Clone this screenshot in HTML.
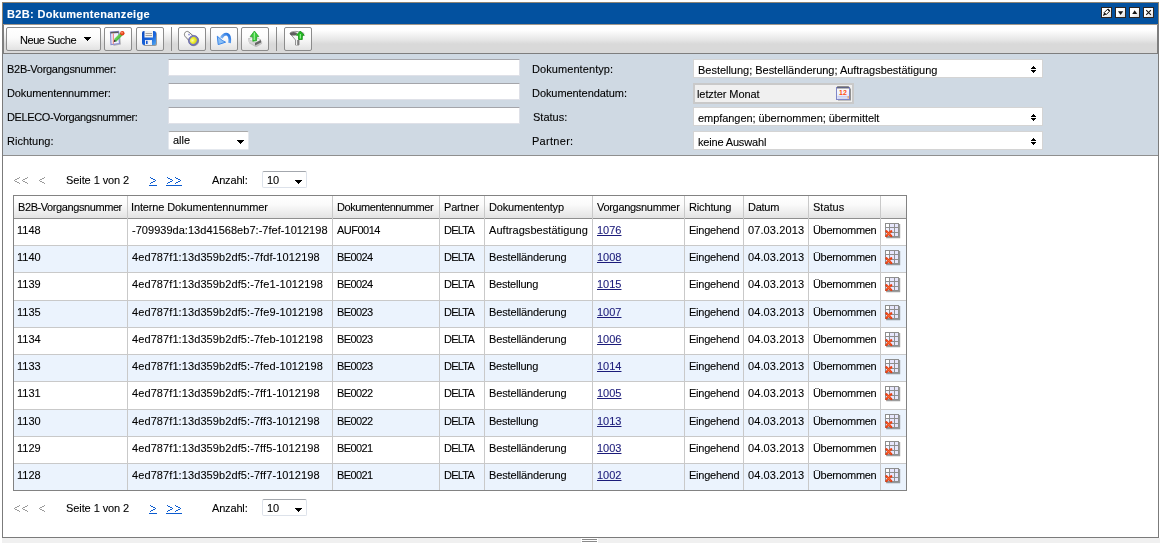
<!DOCTYPE html>
<html><head><meta charset="utf-8"><title>B2B: Dokumentenanzeige</title>
<style>
*{margin:0;padding:0;box-sizing:border-box}
html,body{width:1162px;height:546px;overflow:hidden;background:#fff;font-family:"Liberation Sans",sans-serif;font-size:11px;color:#000}
.a{position:absolute}
.t{position:absolute;white-space:nowrap;line-height:13px;will-change:transform;-webkit-text-stroke:0.1px currentColor}
</style></head><body>

<div class="a" style="left:2px;top:2px;width:1157px;height:536px;border:1px solid #7b7b7b;background:#fff"></div>
<div class="a" style="left:3px;top:3px;width:1155px;height:21px;background:#03519f"></div>
<div class="a" style="left:2px;top:2px;width:1157px;height:22px;border:1px solid #8e8474;border-bottom:0"></div>
<div class="t" style="left:7px;top:8px;letter-spacing:0.333px;color:#fff;font-weight:bold">B2B: Dokumentenanzeige</div>
<div class="a" style="left:1101px;top:7px;width:11px;height:11px;border:1px solid #2e2622;background:linear-gradient(135deg,#fff 45%,#dcdcdc)"></div>
<svg class="a" style="left:1101px;top:7px" width="11" height="11" viewBox="0 0 11 11"><path d="M3.2 5.6L6.6 2.2L8.6 4.2L5.2 7.6Z" fill="#fff" stroke="#111" stroke-width="1"/><path d="M3.2 5.6L5.2 7.6L1.8 8.9Z" fill="#111"/><path d="M6.2 2.6L7.2 1.6L9.2 3.6L8.2 4.6Z" fill="#111"/></svg>
<div class="a" style="left:1115px;top:7px;width:11px;height:11px;border:1px solid #2e2622;background:linear-gradient(135deg,#fff 45%,#dcdcdc)"></div>
<svg class="a" style="left:1115px;top:7px" width="11" height="11" viewBox="0 0 11 11"><path d="M3 4.2H8.2L5.6 7.9Z" fill="#151515"/></svg>
<div class="a" style="left:1129px;top:7px;width:11px;height:11px;border:1px solid #2e2622;background:linear-gradient(135deg,#fff 45%,#dcdcdc)"></div>
<svg class="a" style="left:1129px;top:7px" width="11" height="11" viewBox="0 0 11 11"><path d="M3.2 6.9H8.2L5.7 3.2Z" fill="#151515"/></svg>
<div class="a" style="left:1143px;top:7px;width:11px;height:11px;border:1px solid #2e2622;background:linear-gradient(135deg,#fff 45%,#dcdcdc)"></div>
<svg class="a" style="left:1143px;top:7px" width="11" height="11" viewBox="0 0 11 11"><path d="M3.2 3.2L7.9 7.9M7.9 3.2L3.2 7.9" stroke="#151515" stroke-width="1.1"/></svg>
<div class="a" style="left:2px;top:24px;width:1157px;height:30px;background:linear-gradient(#fff 0px,#fff 6px,#e6e6e6 16px,#d9d9d9 20px,#d9d9d9 30px);border:1px solid #7e7e7e;border-left-width:2px;border-right-width:2px;border-top:0"></div>
<div class="a" style="left:3px;top:24px;width:1155px;height:1px;background:#a0978c"></div>
<div class="a" style="left:6px;top:27px;width:95px;height:24px;border:1px solid #8c8c8c;border-radius:2px;background:linear-gradient(#fff 0%,#fbfbfb 45%,#e2e2e2 100%)"></div>
<div class="t" style="left:20px;top:34px;letter-spacing:-0.444px;">Neue Suche</div>
<svg class="a" style="left:84px;top:37px" width="7" height="4" shape-rendering="crispEdges"><path d="M0 0h7v1h-7zM1 1h5v1h-5zM2 2h3v1h-3zM3 3h1v1h-1z" fill="#000"/></svg>
<div class="a" style="left:104px;top:27px;width:28px;height:24px;border:1px solid #8c8c8c;border-radius:2px;background:linear-gradient(#fff 0%,#fbfbfb 45%,#e2e2e2 100%)"></div>
<div class="a" style="left:136px;top:27px;width:28px;height:24px;border:1px solid #8c8c8c;border-radius:2px;background:linear-gradient(#fff 0%,#fbfbfb 45%,#e2e2e2 100%)"></div>
<div class="a" style="left:178px;top:27px;width:28px;height:24px;border:1px solid #8c8c8c;border-radius:2px;background:linear-gradient(#fff 0%,#fbfbfb 45%,#e2e2e2 100%)"></div>
<div class="a" style="left:210px;top:27px;width:28px;height:24px;border:1px solid #8c8c8c;border-radius:2px;background:linear-gradient(#fff 0%,#fbfbfb 45%,#e2e2e2 100%)"></div>
<div class="a" style="left:241px;top:27px;width:28px;height:24px;border:1px solid #8c8c8c;border-radius:2px;background:linear-gradient(#fff 0%,#fbfbfb 45%,#e2e2e2 100%)"></div>
<div class="a" style="left:284px;top:27px;width:28px;height:24px;border:1px solid #8c8c8c;border-radius:2px;background:linear-gradient(#fff 0%,#fbfbfb 45%,#e2e2e2 100%)"></div>
<div class="a" style="left:171px;top:27px;width:1px;height:24px;background:#8a8a8a"></div>
<div class="a" style="left:276px;top:27px;width:1px;height:24px;background:#8a8a8a"></div>
<svg class="a" style="left:109px;top:30px" width="17" height="17" viewBox="0 0 17 17"><defs><linearGradient id="gp" x1="0" y1="0" x2="1" y2="1"><stop offset="0" stop-color="#9ef07a"/><stop offset="1" stop-color="#1d9e1d"/></linearGradient></defs><path d="M2.5 2.5L10 1.5L11 13.5L3.5 15Z" fill="#555" opacity=".35" transform="translate(1,1)"/><path d="M1.5 2L9.5 1.5L10.5 13.5L2 14.5Z" fill="#eef3ff" stroke="#8a8cd0" stroke-width="1.2"/><path d="M1.5 2L9.5 1.5L9.6 3L1.6 3.5Z" fill="#5a5a5a"/><path d="M4.3 3.5V14" stroke="#f07a70" stroke-width="1"/><path d="M6 10.5L12.5 4" stroke="url(#gp)" stroke-width="3.2"/><path d="M5.2 11.6L6.6 11.2L5.6 10.2Z" fill="#333" stroke="#333" stroke-width="1"/><circle cx="13.3" cy="3.3" r="2.2" fill="#e2401a"/><circle cx="13" cy="2.8" r="1" fill="#ff8a60"/></svg>
<svg class="a" style="left:141px;top:30px" width="17" height="17" viewBox="0 0 17 17"><defs><linearGradient id="gs" x1="0" y1="0" x2="1" y2="1"><stop offset="0" stop-color="#0a48c0"/><stop offset=".6" stop-color="#1a66dc"/><stop offset="1" stop-color="#55aaf0"/></linearGradient></defs><rect x="2" y="2" width="14" height="14" rx="2" fill="#333" opacity=".45"/><rect x="1" y="1" width="14" height="14" rx="2" fill="url(#gs)"/><rect x="3.5" y="1" width="8.5" height="6.5" fill="#f4f2ee"/><path d="M4.5 3.5h6.5M4.5 5.5h6.5" stroke="#9a9a9a" stroke-width=".9"/><rect x="4" y="10" width="7" height="5" fill="#e8ecf4"/><rect x="5" y="10.8" width="1.6" height="3.2" fill="#1a5ad0"/><path d="M8 14L10 11" stroke="#fff" stroke-width="1"/></svg>
<svg class="a" style="left:183px;top:30px" width="17" height="17" viewBox="0 0 17 17"><defs><linearGradient id="gf" x1="0" y1="1" x2="1" y2="0"><stop offset="0" stop-color="#d8d8d8"/><stop offset=".5" stop-color="#ffffff"/><stop offset="1" stop-color="#cfcfcf"/></linearGradient><radialGradient id="gl" cx=".4" cy=".4" r=".7"><stop offset="0" stop-color="#fbfbb0"/><stop offset=".5" stop-color="#eded2a"/><stop offset="1" stop-color="#c8c820"/></radialGradient></defs><path d="M1.6 3.4C2.2 1.4 4.4 0.8 5.8 2L12.2 7.6L7.6 12.4L1.9 6.2C1.3 5.4 1.3 4.3 1.6 3.4Z" fill="url(#gf)" stroke="#7c7c7c" stroke-width="1"/><circle cx="6" cy="4.6" r="0.9" fill="#8a8fd8"/><ellipse cx="11.2" cy="11.2" rx="5.2" ry="4.8" transform="rotate(-45 11.2 11.2)" fill="#3c3c3c" opacity=".4"/><ellipse cx="10.4" cy="10.4" rx="5.2" ry="4.8" transform="rotate(-45 10.4 10.4)" fill="#7a7cc0" stroke="#5a5c98" stroke-width=".6"/><ellipse cx="10.4" cy="10.4" rx="3.6" ry="3.3" transform="rotate(-45 10.4 10.4)" fill="url(#gl)"/></svg>
<svg class="a" style="left:215px;top:31px" width="17" height="16" viewBox="0 0 17 16"><defs><linearGradient id="gu" x1="0" y1="1" x2="1" y2="0"><stop offset="0" stop-color="#a8d0fa"/><stop offset="1" stop-color="#1c6fe0"/></linearGradient></defs><path d="M14.6 12C15.4 7 14.2 3.2 11.2 3.1C9 3 7.6 4.6 6.2 7" stroke="url(#gu)" stroke-width="2.8" fill="none"/><path d="M2.3 5.2L3.2 13.6L10.6 11.2L7.2 9.4Z" fill="#8cc0f6" stroke="#3a86e8" stroke-width="1" stroke-linejoin="round"/></svg>
<svg class="a" style="left:246px;top:30px" width="17" height="17" viewBox="0 0 17 17"><path d="M2.5 10L9 7L15.5 10.5L15.5 13L9.5 16.5L2.5 12.5Z" fill="#444" opacity=".25" transform="translate(.6,.8)"/><path d="M2 9L8.5 6.5L15 10L9 13Z" fill="#f6f6f6" stroke="#a0a0a0" stroke-width=".6"/><path d="M2 9L2 11.6L9 15.6L9 13Z" fill="#d6d6d6"/><path d="M9 13L15 10L15 12.6L9 15.6Z" fill="#666"/><path d="M8.4 1L12.8 6.6L10.6 6.6L10.6 10.8L6.8 11.2L6.8 6.6L4.2 6.6Z" fill="#3ccc3c" stroke="#1a9a1a" stroke-width=".7"/><path d="M8.4 2.6L8.2 10" stroke="#a0f5a0" stroke-width="1.1"/></svg>
<svg class="a" style="left:289px;top:30px" width="17" height="17" viewBox="0 0 17 17"><path d="M1 3.5C1 2 5 1 8 1.5C11 2 15 2.5 15 4L10 10L10 15L6.5 15L6.5 10Z" fill="#f4f4f4" stroke="#7a7a7a" stroke-width=".8"/><ellipse cx="4.5" cy="3.8" rx="3.5" ry="1.8" fill="#3a3a3a" opacity=".8"/><rect x="7" y="10" width="3" height="5" fill="#7c7c7c"/><rect x="7" y="10" width="1.2" height="5" fill="#f0f0f0"/><path d="M11.3 1L15.3 5.3L13.3 5.3L13.3 9.5L9.5 9.5L9.5 5.3L7.3 5.3Z" fill="#22b822" stroke="#149014" stroke-width=".8"/><path d="M11.4 4L11.4 8.5" stroke="#90f090" stroke-width="1.3"/></svg>
<div class="a" style="left:3px;top:54px;width:1155px;height:102px;background:#cfd9e3;border-bottom:1px solid #8f8f8f"></div>
<div class="t" style="left:7px;top:63px;letter-spacing:-0.278px;">B2B-Vorgangsnummer:</div>
<div class="t" style="left:7px;top:87px;letter-spacing:-0.125px;">Dokumentennummer:</div>
<div class="t" style="left:7px;top:111px;letter-spacing:-0.381px;">DELECO-Vorgangsnummer:</div>
<div class="t" style="left:7px;top:135px;">Richtung:</div>
<div class="a" style="left:168px;top:59px;width:352px;height:17px;background:#fff;border:1px solid #dfe1e8;border-top-color:#a4a5aa;border-radius:1px"></div>
<div class="a" style="left:168px;top:83px;width:352px;height:17px;background:#fff;border:1px solid #dfe1e8;border-top-color:#a4a5aa;border-radius:1px"></div>
<div class="a" style="left:168px;top:107px;width:352px;height:17px;background:#fff;border:1px solid #dfe1e8;border-top-color:#a4a5aa;border-radius:1px"></div>
<div class="a" style="left:168px;top:131px;width:81px;height:19px;background:#fff;border:1px solid #e4e8ee;border-top-color:#a9a9a9;border-radius:2px"></div>
<div class="t" style="left:173px;top:134px;">alle</div>
<svg class="a" style="left:237px;top:140px" width="7" height="4" shape-rendering="crispEdges"><path d="M0 0h7v1h-7zM1 1h5v1h-5zM2 2h3v1h-3zM3 3h1v1h-1z" fill="#000"/></svg>
<div class="t" style="left:532px;top:63px;letter-spacing:0.077px;">Dokumententyp:</div>
<div class="t" style="left:532px;top:87px;letter-spacing:-0.067px;">Dokumentendatum:</div>
<div class="t" style="left:533px;top:111px;">Status:</div>
<div class="t" style="left:532px;top:135px;letter-spacing:0.286px;">Partner:</div>
<div class="a" style="left:693px;top:59px;width:350px;height:19px;background:#fff;border:1px solid #d4d4d4"></div>
<div class="t" style="left:698px;top:64px;letter-spacing:-0.021px;">Bestellung; Bestelländerung; Auftragsbestätigung</div>
<svg class="a" style="left:1031px;top:66px" width="5" height="7" shape-rendering="crispEdges"><path d="M2 0h1v1h-1zM1 1h3v1h-3zM0 2h5v1h-5zM0 4h5v1h-5zM1 5h3v1h-3zM2 6h1v1h-1z" fill="#000"/></svg>
<div class="a" style="left:693px;top:107px;width:350px;height:19px;background:#fff;border:1px solid #d4d4d4"></div>
<div class="t" style="left:698px;top:112px;letter-spacing:-0.061px;">empfangen; übernommen; übermittelt</div>
<svg class="a" style="left:1031px;top:114px" width="5" height="7" shape-rendering="crispEdges"><path d="M2 0h1v1h-1zM1 1h3v1h-3zM0 2h5v1h-5zM0 4h5v1h-5zM1 5h3v1h-3zM2 6h1v1h-1z" fill="#000"/></svg>
<div class="a" style="left:693px;top:131px;width:350px;height:19px;background:#fff;border:1px solid #d4d4d4"></div>
<div class="t" style="left:698px;top:136px;letter-spacing:-0.167px;">keine Auswahl</div>
<svg class="a" style="left:1031px;top:138px" width="5" height="7" shape-rendering="crispEdges"><path d="M2 0h1v1h-1zM1 1h3v1h-3zM0 2h5v1h-5zM0 4h5v1h-5zM1 5h3v1h-3zM2 6h1v1h-1z" fill="#000"/></svg>
<div class="a" style="left:693px;top:83px;width:161px;height:21px;background:#f0f0f0;border:2px solid #c9c9c9"></div>
<div class="t" style="left:697px;top:88px;letter-spacing:-0.083px;">letzter Monat</div>
<svg class="a" style="left:835px;top:85px" width="17" height="16" viewBox="0 0 17 16"><defs><linearGradient id="gc" x1="0" y1="0" x2="0" y2="1"><stop offset="0" stop-color="#ffffff"/><stop offset="1" stop-color="#dfe3f8"/></linearGradient></defs><path d="M15 3.5h1v12h-13v-1h12z" fill="#444" opacity=".55"/><rect x="1.5" y="2.5" width="13" height="12" fill="url(#gc)" stroke="#7f86c6"/><path d="M3 1.2v2.6M5 1.2v2.6M7 1.2v2.6M9 1.2v2.6M11 1.2v2.6M13 1.2v2.6" stroke="#3c3c3c" stroke-width=".9"/><path d="M2.5 1.5h11" stroke="#777" stroke-width=".6"/><text x="8" y="10.2" font-size="7" font-weight="bold" fill="#ff5010" text-anchor="middle" font-family="Liberation Sans">12</text><path d="M2.5 11.5h11M2.5 13h11" stroke="#c4c9ee" stroke-width=".8"/><rect x="12.6" y="11" width="1.2" height="2.5" fill="#f0a060"/></svg>
<svg class="a" style="left:14px;top:177px" width="32" height="7" shape-rendering="crispEdges"><path d="M5 0h1v1h-1zM3 1h2v1h-2zM1 2h2v1h-2zM0 3h1v1h-1zM1 4h2v1h-2zM3 5h2v1h-2zM5 6h1v1h-1zM13 0h1v1h-1zM11 1h2v1h-2zM9 2h2v1h-2zM8 3h1v1h-1zM9 4h2v1h-2zM11 5h2v1h-2zM13 6h1v1h-1zM30 0h1v1h-1zM28 1h2v1h-2zM26 2h2v1h-2zM25 3h1v1h-1zM26 4h2v1h-2zM28 5h2v1h-2zM30 6h1v1h-1z" fill="#9a9a9a"/></svg>
<div class="t" style="left:66px;top:174px;letter-spacing:-0.083px;">Seite 1 von 2</div>
<svg class="a" style="left:149px;top:177px" width="34" height="9" shape-rendering="crispEdges"><path d="M1 0h1v1h-1zM2 1h2v1h-2zM4 2h2v1h-2zM6 3h1v1h-1zM4 4h2v1h-2zM2 5h2v1h-2zM1 6h1v1h-1zM18 0h1v1h-1zM19 1h2v1h-2zM21 2h2v1h-2zM23 3h1v1h-1zM21 4h2v1h-2zM19 5h2v1h-2zM18 6h1v1h-1zM26 0h1v1h-1zM27 1h2v1h-2zM29 2h2v1h-2zM31 3h1v1h-1zM29 4h2v1h-2zM27 5h2v1h-2zM26 6h1v1h-1zM0 8h8v1h-8zM17 8h16v1h-16z" fill="#0c5cd0"/></svg>
<div class="t" style="left:212px;top:174px;letter-spacing:-0.167px;">Anzahl:</div>
<div class="a" style="left:262px;top:171px;width:45px;height:17px;border:1px solid #dde2ea;border-top-color:#a3a7ad;border-radius:2px;background:#fff"></div>
<div class="t" style="left:267px;top:174px;">10</div>
<svg class="a" style="left:295px;top:180px" width="7" height="4" shape-rendering="crispEdges"><path d="M0 0h7v1h-7zM1 1h5v1h-5zM2 2h3v1h-3zM3 3h1v1h-1z" fill="#000"/></svg>
<svg class="a" style="left:14px;top:505px" width="32" height="7" shape-rendering="crispEdges"><path d="M5 0h1v1h-1zM3 1h2v1h-2zM1 2h2v1h-2zM0 3h1v1h-1zM1 4h2v1h-2zM3 5h2v1h-2zM5 6h1v1h-1zM13 0h1v1h-1zM11 1h2v1h-2zM9 2h2v1h-2zM8 3h1v1h-1zM9 4h2v1h-2zM11 5h2v1h-2zM13 6h1v1h-1zM30 0h1v1h-1zM28 1h2v1h-2zM26 2h2v1h-2zM25 3h1v1h-1zM26 4h2v1h-2zM28 5h2v1h-2zM30 6h1v1h-1z" fill="#9a9a9a"/></svg>
<div class="t" style="left:66px;top:502px;letter-spacing:-0.083px;">Seite 1 von 2</div>
<svg class="a" style="left:149px;top:505px" width="34" height="9" shape-rendering="crispEdges"><path d="M1 0h1v1h-1zM2 1h2v1h-2zM4 2h2v1h-2zM6 3h1v1h-1zM4 4h2v1h-2zM2 5h2v1h-2zM1 6h1v1h-1zM18 0h1v1h-1zM19 1h2v1h-2zM21 2h2v1h-2zM23 3h1v1h-1zM21 4h2v1h-2zM19 5h2v1h-2zM18 6h1v1h-1zM26 0h1v1h-1zM27 1h2v1h-2zM29 2h2v1h-2zM31 3h1v1h-1zM29 4h2v1h-2zM27 5h2v1h-2zM26 6h1v1h-1zM0 8h8v1h-8zM17 8h16v1h-16z" fill="#0c5cd0"/></svg>
<div class="t" style="left:212px;top:502px;letter-spacing:-0.167px;">Anzahl:</div>
<div class="a" style="left:262px;top:499px;width:45px;height:17px;border:1px solid #dde2ea;border-top-color:#a3a7ad;border-radius:2px;background:#fff"></div>
<div class="t" style="left:267px;top:502px;">10</div>
<svg class="a" style="left:295px;top:508px" width="7" height="4" shape-rendering="crispEdges"><path d="M0 0h7v1h-7zM1 1h5v1h-5zM2 2h3v1h-3zM3 3h1v1h-1z" fill="#000"/></svg>
<div class="a" style="left:13px;top:195px;width:894px;height:296px;border:1px solid #828282;background:#fff"></div>
<div class="a" style="left:14px;top:196px;width:892px;height:22px;background:linear-gradient(#fff 0%,#fafafa 40%,#e3e3e3 100%)"></div>
<div class="a" style="left:14px;top:218px;width:892px;height:1px;background:#8e8e8e"></div>
<div class="a" style="left:14px;top:219px;width:892px;height:26px;background:#fff"></div>
<div class="a" style="left:14px;top:245px;width:892px;height:1px;background:#c9c9c9"></div>
<div class="a" style="left:14px;top:246px;width:892px;height:26px;background:#ebf3fd"></div>
<div class="a" style="left:14px;top:272px;width:892px;height:1px;background:#c9c9c9"></div>
<div class="a" style="left:14px;top:273px;width:892px;height:27px;background:#fff"></div>
<div class="a" style="left:14px;top:300px;width:892px;height:1px;background:#c9c9c9"></div>
<div class="a" style="left:14px;top:301px;width:892px;height:26px;background:#ebf3fd"></div>
<div class="a" style="left:14px;top:327px;width:892px;height:1px;background:#c9c9c9"></div>
<div class="a" style="left:14px;top:328px;width:892px;height:26px;background:#fff"></div>
<div class="a" style="left:14px;top:354px;width:892px;height:1px;background:#c9c9c9"></div>
<div class="a" style="left:14px;top:355px;width:892px;height:26px;background:#ebf3fd"></div>
<div class="a" style="left:14px;top:381px;width:892px;height:1px;background:#c9c9c9"></div>
<div class="a" style="left:14px;top:382px;width:892px;height:27px;background:#fff"></div>
<div class="a" style="left:14px;top:409px;width:892px;height:1px;background:#c9c9c9"></div>
<div class="a" style="left:14px;top:410px;width:892px;height:26px;background:#ebf3fd"></div>
<div class="a" style="left:14px;top:436px;width:892px;height:1px;background:#c9c9c9"></div>
<div class="a" style="left:14px;top:437px;width:892px;height:26px;background:#fff"></div>
<div class="a" style="left:14px;top:463px;width:892px;height:1px;background:#c9c9c9"></div>
<div class="a" style="left:14px;top:464px;width:892px;height:26px;background:#ebf3fd"></div>
<div class="a" style="left:127px;top:196px;width:1px;height:294px;background:#c9c9c9"></div>
<div class="a" style="left:332px;top:196px;width:1px;height:294px;background:#c9c9c9"></div>
<div class="a" style="left:439px;top:196px;width:1px;height:294px;background:#c9c9c9"></div>
<div class="a" style="left:484px;top:196px;width:1px;height:294px;background:#c9c9c9"></div>
<div class="a" style="left:592px;top:196px;width:1px;height:294px;background:#c9c9c9"></div>
<div class="a" style="left:684px;top:196px;width:1px;height:294px;background:#c9c9c9"></div>
<div class="a" style="left:743px;top:196px;width:1px;height:294px;background:#c9c9c9"></div>
<div class="a" style="left:808px;top:196px;width:1px;height:294px;background:#c9c9c9"></div>
<div class="a" style="left:880px;top:196px;width:1px;height:294px;background:#c9c9c9"></div>
<div class="t" style="left:18px;top:201px;letter-spacing:-0.412px;">B2B-Vorgangsnummer</div>
<div class="t" style="left:131px;top:201px;letter-spacing:-0.130px;">Interne Dokumentennummer</div>
<div class="t" style="left:337px;top:201px;letter-spacing:-0.400px;">Dokumentennummer</div>
<div class="t" style="left:444px;top:201px;letter-spacing:-0.167px;">Partner</div>
<div class="t" style="left:489px;top:201px;letter-spacing:-0.167px;">Dokumententyp</div>
<div class="t" style="left:597px;top:201px;letter-spacing:-0.308px;">Vorgangsnummer</div>
<div class="t" style="left:689px;top:201px;letter-spacing:-0.143px;">Richtung</div>
<div class="t" style="left:748px;top:201px;letter-spacing:-0.250px;">Datum</div>
<div class="t" style="left:813px;top:201px;">Status</div>
<div class="t" style="left:17px;top:224px;">1148</div>
<div class="t" style="left:132px;top:224px;letter-spacing:0.029px;">-709939da:13d41568eb7:-7fef-1012198</div>
<div class="t" style="left:337px;top:224px;letter-spacing:-0.500px;">AUF0014</div>
<div class="t" style="left:444px;top:224px;letter-spacing:-0.750px;">DELTA</div>
<div class="t" style="left:489px;top:224px;letter-spacing:0.056px;">Auftragsbestätigung</div>
<div class="t" style="left:597px;top:224px;color:#1b1b7a;text-decoration:underline;">1076</div>
<div class="t" style="left:689px;top:224px;letter-spacing:-0.250px;">Eingehend</div>
<div class="t" style="left:748px;top:224px;letter-spacing:0.111px;">07.03.2013</div>
<div class="t" style="left:813px;top:224px;letter-spacing:-0.333px;">Übernommen</div>
<svg class="a" style="left:885px;top:223px" width="17" height="17" viewBox="0 0 17 17"><path d="M14 1h1.2v14.2h-14v-1.2h12.8z" fill="#4a4a4a" opacity=".55"/><rect x="0" y="0" width="14" height="14" fill="#8e8e8e"/><rect x="1" y="1" width="3" height="3" fill="#fff"/><rect x="5" y="1" width="4" height="3" fill="#e6e6fc"/><rect x="10" y="1" width="3" height="3" fill="#e6e6fc"/><rect x="1" y="5" width="3" height="4" fill="#f2f2ff"/><rect x="5" y="5" width="4" height="4" fill="#e6e6fc"/><rect x="10" y="5" width="3" height="4" fill="#e6e6fc"/><rect x="1" y="10" width="3" height="3" fill="#e6e6fc"/><rect x="5" y="10" width="4" height="3" fill="#e6e6fc"/><rect x="10" y="10" width="3" height="3" fill="#e6e6fc"/><path d="M1.4 8.2L6.2 13M6.2 8.2L1.4 13" stroke="#e63a10" stroke-width="2.3" stroke-linecap="round"/><path d="M1.9 8.7L5.7 12.5M5.7 8.7L1.9 12.5" stroke="#ff8040" stroke-width=".8"/></svg>
<div class="t" style="left:17px;top:251px;">1140</div>
<div class="t" style="left:132px;top:251px;letter-spacing:0.091px;">4ed787f1:13d359b2df5:-7fdf-1012198</div>
<div class="t" style="left:337px;top:251px;letter-spacing:-0.600px;">BE0024</div>
<div class="t" style="left:444px;top:251px;letter-spacing:-0.750px;">DELTA</div>
<div class="t" style="left:489px;top:251px;letter-spacing:-0.143px;">Bestelländerung</div>
<div class="t" style="left:597px;top:251px;color:#1b1b7a;text-decoration:underline;">1008</div>
<div class="t" style="left:689px;top:251px;letter-spacing:-0.250px;">Eingehend</div>
<div class="t" style="left:748px;top:251px;letter-spacing:0.111px;">04.03.2013</div>
<div class="t" style="left:813px;top:251px;letter-spacing:-0.333px;">Übernommen</div>
<svg class="a" style="left:885px;top:250px" width="17" height="17" viewBox="0 0 17 17"><path d="M14 1h1.2v14.2h-14v-1.2h12.8z" fill="#4a4a4a" opacity=".55"/><rect x="0" y="0" width="14" height="14" fill="#8e8e8e"/><rect x="1" y="1" width="3" height="3" fill="#fff"/><rect x="5" y="1" width="4" height="3" fill="#e6e6fc"/><rect x="10" y="1" width="3" height="3" fill="#e6e6fc"/><rect x="1" y="5" width="3" height="4" fill="#f2f2ff"/><rect x="5" y="5" width="4" height="4" fill="#e6e6fc"/><rect x="10" y="5" width="3" height="4" fill="#e6e6fc"/><rect x="1" y="10" width="3" height="3" fill="#e6e6fc"/><rect x="5" y="10" width="4" height="3" fill="#e6e6fc"/><rect x="10" y="10" width="3" height="3" fill="#e6e6fc"/><path d="M1.4 8.2L6.2 13M6.2 8.2L1.4 13" stroke="#e63a10" stroke-width="2.3" stroke-linecap="round"/><path d="M1.9 8.7L5.7 12.5M5.7 8.7L1.9 12.5" stroke="#ff8040" stroke-width=".8"/></svg>
<div class="t" style="left:17px;top:278px;">1139</div>
<div class="t" style="left:132px;top:278px;letter-spacing:0.091px;">4ed787f1:13d359b2df5:-7fe1-1012198</div>
<div class="t" style="left:337px;top:278px;letter-spacing:-0.600px;">BE0024</div>
<div class="t" style="left:444px;top:278px;letter-spacing:-0.750px;">DELTA</div>
<div class="t" style="left:489px;top:278px;letter-spacing:-0.222px;">Bestellung</div>
<div class="t" style="left:597px;top:278px;color:#1b1b7a;text-decoration:underline;">1015</div>
<div class="t" style="left:689px;top:278px;letter-spacing:-0.250px;">Eingehend</div>
<div class="t" style="left:748px;top:278px;letter-spacing:0.111px;">04.03.2013</div>
<div class="t" style="left:813px;top:278px;letter-spacing:-0.333px;">Übernommen</div>
<svg class="a" style="left:885px;top:277px" width="17" height="17" viewBox="0 0 17 17"><path d="M14 1h1.2v14.2h-14v-1.2h12.8z" fill="#4a4a4a" opacity=".55"/><rect x="0" y="0" width="14" height="14" fill="#8e8e8e"/><rect x="1" y="1" width="3" height="3" fill="#fff"/><rect x="5" y="1" width="4" height="3" fill="#e6e6fc"/><rect x="10" y="1" width="3" height="3" fill="#e6e6fc"/><rect x="1" y="5" width="3" height="4" fill="#f2f2ff"/><rect x="5" y="5" width="4" height="4" fill="#e6e6fc"/><rect x="10" y="5" width="3" height="4" fill="#e6e6fc"/><rect x="1" y="10" width="3" height="3" fill="#e6e6fc"/><rect x="5" y="10" width="4" height="3" fill="#e6e6fc"/><rect x="10" y="10" width="3" height="3" fill="#e6e6fc"/><path d="M1.4 8.2L6.2 13M6.2 8.2L1.4 13" stroke="#e63a10" stroke-width="2.3" stroke-linecap="round"/><path d="M1.9 8.7L5.7 12.5M5.7 8.7L1.9 12.5" stroke="#ff8040" stroke-width=".8"/></svg>
<div class="t" style="left:17px;top:306px;">1135</div>
<div class="t" style="left:132px;top:306px;letter-spacing:0.091px;">4ed787f1:13d359b2df5:-7fe9-1012198</div>
<div class="t" style="left:337px;top:306px;letter-spacing:-0.600px;">BE0023</div>
<div class="t" style="left:444px;top:306px;letter-spacing:-0.750px;">DELTA</div>
<div class="t" style="left:489px;top:306px;letter-spacing:-0.143px;">Bestelländerung</div>
<div class="t" style="left:597px;top:306px;color:#1b1b7a;text-decoration:underline;">1007</div>
<div class="t" style="left:689px;top:306px;letter-spacing:-0.250px;">Eingehend</div>
<div class="t" style="left:748px;top:306px;letter-spacing:0.111px;">04.03.2013</div>
<div class="t" style="left:813px;top:306px;letter-spacing:-0.333px;">Übernommen</div>
<svg class="a" style="left:885px;top:305px" width="17" height="17" viewBox="0 0 17 17"><path d="M14 1h1.2v14.2h-14v-1.2h12.8z" fill="#4a4a4a" opacity=".55"/><rect x="0" y="0" width="14" height="14" fill="#8e8e8e"/><rect x="1" y="1" width="3" height="3" fill="#fff"/><rect x="5" y="1" width="4" height="3" fill="#e6e6fc"/><rect x="10" y="1" width="3" height="3" fill="#e6e6fc"/><rect x="1" y="5" width="3" height="4" fill="#f2f2ff"/><rect x="5" y="5" width="4" height="4" fill="#e6e6fc"/><rect x="10" y="5" width="3" height="4" fill="#e6e6fc"/><rect x="1" y="10" width="3" height="3" fill="#e6e6fc"/><rect x="5" y="10" width="4" height="3" fill="#e6e6fc"/><rect x="10" y="10" width="3" height="3" fill="#e6e6fc"/><path d="M1.4 8.2L6.2 13M6.2 8.2L1.4 13" stroke="#e63a10" stroke-width="2.3" stroke-linecap="round"/><path d="M1.9 8.7L5.7 12.5M5.7 8.7L1.9 12.5" stroke="#ff8040" stroke-width=".8"/></svg>
<div class="t" style="left:17px;top:333px;">1134</div>
<div class="t" style="left:132px;top:333px;letter-spacing:0.091px;">4ed787f1:13d359b2df5:-7feb-1012198</div>
<div class="t" style="left:337px;top:333px;letter-spacing:-0.600px;">BE0023</div>
<div class="t" style="left:444px;top:333px;letter-spacing:-0.750px;">DELTA</div>
<div class="t" style="left:489px;top:333px;letter-spacing:-0.143px;">Bestelländerung</div>
<div class="t" style="left:597px;top:333px;color:#1b1b7a;text-decoration:underline;">1006</div>
<div class="t" style="left:689px;top:333px;letter-spacing:-0.250px;">Eingehend</div>
<div class="t" style="left:748px;top:333px;letter-spacing:0.111px;">04.03.2013</div>
<div class="t" style="left:813px;top:333px;letter-spacing:-0.333px;">Übernommen</div>
<svg class="a" style="left:885px;top:332px" width="17" height="17" viewBox="0 0 17 17"><path d="M14 1h1.2v14.2h-14v-1.2h12.8z" fill="#4a4a4a" opacity=".55"/><rect x="0" y="0" width="14" height="14" fill="#8e8e8e"/><rect x="1" y="1" width="3" height="3" fill="#fff"/><rect x="5" y="1" width="4" height="3" fill="#e6e6fc"/><rect x="10" y="1" width="3" height="3" fill="#e6e6fc"/><rect x="1" y="5" width="3" height="4" fill="#f2f2ff"/><rect x="5" y="5" width="4" height="4" fill="#e6e6fc"/><rect x="10" y="5" width="3" height="4" fill="#e6e6fc"/><rect x="1" y="10" width="3" height="3" fill="#e6e6fc"/><rect x="5" y="10" width="4" height="3" fill="#e6e6fc"/><rect x="10" y="10" width="3" height="3" fill="#e6e6fc"/><path d="M1.4 8.2L6.2 13M6.2 8.2L1.4 13" stroke="#e63a10" stroke-width="2.3" stroke-linecap="round"/><path d="M1.9 8.7L5.7 12.5M5.7 8.7L1.9 12.5" stroke="#ff8040" stroke-width=".8"/></svg>
<div class="t" style="left:17px;top:360px;">1133</div>
<div class="t" style="left:132px;top:360px;letter-spacing:0.091px;">4ed787f1:13d359b2df5:-7fed-1012198</div>
<div class="t" style="left:337px;top:360px;letter-spacing:-0.600px;">BE0023</div>
<div class="t" style="left:444px;top:360px;letter-spacing:-0.750px;">DELTA</div>
<div class="t" style="left:489px;top:360px;letter-spacing:-0.222px;">Bestellung</div>
<div class="t" style="left:597px;top:360px;color:#1b1b7a;text-decoration:underline;">1014</div>
<div class="t" style="left:689px;top:360px;letter-spacing:-0.250px;">Eingehend</div>
<div class="t" style="left:748px;top:360px;letter-spacing:0.111px;">04.03.2013</div>
<div class="t" style="left:813px;top:360px;letter-spacing:-0.333px;">Übernommen</div>
<svg class="a" style="left:885px;top:359px" width="17" height="17" viewBox="0 0 17 17"><path d="M14 1h1.2v14.2h-14v-1.2h12.8z" fill="#4a4a4a" opacity=".55"/><rect x="0" y="0" width="14" height="14" fill="#8e8e8e"/><rect x="1" y="1" width="3" height="3" fill="#fff"/><rect x="5" y="1" width="4" height="3" fill="#e6e6fc"/><rect x="10" y="1" width="3" height="3" fill="#e6e6fc"/><rect x="1" y="5" width="3" height="4" fill="#f2f2ff"/><rect x="5" y="5" width="4" height="4" fill="#e6e6fc"/><rect x="10" y="5" width="3" height="4" fill="#e6e6fc"/><rect x="1" y="10" width="3" height="3" fill="#e6e6fc"/><rect x="5" y="10" width="4" height="3" fill="#e6e6fc"/><rect x="10" y="10" width="3" height="3" fill="#e6e6fc"/><path d="M1.4 8.2L6.2 13M6.2 8.2L1.4 13" stroke="#e63a10" stroke-width="2.3" stroke-linecap="round"/><path d="M1.9 8.7L5.7 12.5M5.7 8.7L1.9 12.5" stroke="#ff8040" stroke-width=".8"/></svg>
<div class="t" style="left:17px;top:387px;">1131</div>
<div class="t" style="left:132px;top:387px;letter-spacing:0.091px;">4ed787f1:13d359b2df5:-7ff1-1012198</div>
<div class="t" style="left:337px;top:387px;letter-spacing:-0.600px;">BE0022</div>
<div class="t" style="left:444px;top:387px;letter-spacing:-0.750px;">DELTA</div>
<div class="t" style="left:489px;top:387px;letter-spacing:-0.143px;">Bestelländerung</div>
<div class="t" style="left:597px;top:387px;color:#1b1b7a;text-decoration:underline;">1005</div>
<div class="t" style="left:689px;top:387px;letter-spacing:-0.250px;">Eingehend</div>
<div class="t" style="left:748px;top:387px;letter-spacing:0.111px;">04.03.2013</div>
<div class="t" style="left:813px;top:387px;letter-spacing:-0.333px;">Übernommen</div>
<svg class="a" style="left:885px;top:386px" width="17" height="17" viewBox="0 0 17 17"><path d="M14 1h1.2v14.2h-14v-1.2h12.8z" fill="#4a4a4a" opacity=".55"/><rect x="0" y="0" width="14" height="14" fill="#8e8e8e"/><rect x="1" y="1" width="3" height="3" fill="#fff"/><rect x="5" y="1" width="4" height="3" fill="#e6e6fc"/><rect x="10" y="1" width="3" height="3" fill="#e6e6fc"/><rect x="1" y="5" width="3" height="4" fill="#f2f2ff"/><rect x="5" y="5" width="4" height="4" fill="#e6e6fc"/><rect x="10" y="5" width="3" height="4" fill="#e6e6fc"/><rect x="1" y="10" width="3" height="3" fill="#e6e6fc"/><rect x="5" y="10" width="4" height="3" fill="#e6e6fc"/><rect x="10" y="10" width="3" height="3" fill="#e6e6fc"/><path d="M1.4 8.2L6.2 13M6.2 8.2L1.4 13" stroke="#e63a10" stroke-width="2.3" stroke-linecap="round"/><path d="M1.9 8.7L5.7 12.5M5.7 8.7L1.9 12.5" stroke="#ff8040" stroke-width=".8"/></svg>
<div class="t" style="left:17px;top:415px;">1130</div>
<div class="t" style="left:132px;top:415px;letter-spacing:0.091px;">4ed787f1:13d359b2df5:-7ff3-1012198</div>
<div class="t" style="left:337px;top:415px;letter-spacing:-0.600px;">BE0022</div>
<div class="t" style="left:444px;top:415px;letter-spacing:-0.750px;">DELTA</div>
<div class="t" style="left:489px;top:415px;letter-spacing:-0.222px;">Bestellung</div>
<div class="t" style="left:597px;top:415px;color:#1b1b7a;text-decoration:underline;">1013</div>
<div class="t" style="left:689px;top:415px;letter-spacing:-0.250px;">Eingehend</div>
<div class="t" style="left:748px;top:415px;letter-spacing:0.111px;">04.03.2013</div>
<div class="t" style="left:813px;top:415px;letter-spacing:-0.333px;">Übernommen</div>
<svg class="a" style="left:885px;top:414px" width="17" height="17" viewBox="0 0 17 17"><path d="M14 1h1.2v14.2h-14v-1.2h12.8z" fill="#4a4a4a" opacity=".55"/><rect x="0" y="0" width="14" height="14" fill="#8e8e8e"/><rect x="1" y="1" width="3" height="3" fill="#fff"/><rect x="5" y="1" width="4" height="3" fill="#e6e6fc"/><rect x="10" y="1" width="3" height="3" fill="#e6e6fc"/><rect x="1" y="5" width="3" height="4" fill="#f2f2ff"/><rect x="5" y="5" width="4" height="4" fill="#e6e6fc"/><rect x="10" y="5" width="3" height="4" fill="#e6e6fc"/><rect x="1" y="10" width="3" height="3" fill="#e6e6fc"/><rect x="5" y="10" width="4" height="3" fill="#e6e6fc"/><rect x="10" y="10" width="3" height="3" fill="#e6e6fc"/><path d="M1.4 8.2L6.2 13M6.2 8.2L1.4 13" stroke="#e63a10" stroke-width="2.3" stroke-linecap="round"/><path d="M1.9 8.7L5.7 12.5M5.7 8.7L1.9 12.5" stroke="#ff8040" stroke-width=".8"/></svg>
<div class="t" style="left:17px;top:442px;">1129</div>
<div class="t" style="left:132px;top:442px;letter-spacing:0.091px;">4ed787f1:13d359b2df5:-7ff5-1012198</div>
<div class="t" style="left:337px;top:442px;letter-spacing:-0.600px;">BE0021</div>
<div class="t" style="left:444px;top:442px;letter-spacing:-0.750px;">DELTA</div>
<div class="t" style="left:489px;top:442px;letter-spacing:-0.143px;">Bestelländerung</div>
<div class="t" style="left:597px;top:442px;color:#1b1b7a;text-decoration:underline;">1003</div>
<div class="t" style="left:689px;top:442px;letter-spacing:-0.250px;">Eingehend</div>
<div class="t" style="left:748px;top:442px;letter-spacing:0.111px;">04.03.2013</div>
<div class="t" style="left:813px;top:442px;letter-spacing:-0.333px;">Übernommen</div>
<svg class="a" style="left:885px;top:441px" width="17" height="17" viewBox="0 0 17 17"><path d="M14 1h1.2v14.2h-14v-1.2h12.8z" fill="#4a4a4a" opacity=".55"/><rect x="0" y="0" width="14" height="14" fill="#8e8e8e"/><rect x="1" y="1" width="3" height="3" fill="#fff"/><rect x="5" y="1" width="4" height="3" fill="#e6e6fc"/><rect x="10" y="1" width="3" height="3" fill="#e6e6fc"/><rect x="1" y="5" width="3" height="4" fill="#f2f2ff"/><rect x="5" y="5" width="4" height="4" fill="#e6e6fc"/><rect x="10" y="5" width="3" height="4" fill="#e6e6fc"/><rect x="1" y="10" width="3" height="3" fill="#e6e6fc"/><rect x="5" y="10" width="4" height="3" fill="#e6e6fc"/><rect x="10" y="10" width="3" height="3" fill="#e6e6fc"/><path d="M1.4 8.2L6.2 13M6.2 8.2L1.4 13" stroke="#e63a10" stroke-width="2.3" stroke-linecap="round"/><path d="M1.9 8.7L5.7 12.5M5.7 8.7L1.9 12.5" stroke="#ff8040" stroke-width=".8"/></svg>
<div class="t" style="left:17px;top:469px;">1128</div>
<div class="t" style="left:132px;top:469px;letter-spacing:0.091px;">4ed787f1:13d359b2df5:-7ff7-1012198</div>
<div class="t" style="left:337px;top:469px;letter-spacing:-0.600px;">BE0021</div>
<div class="t" style="left:444px;top:469px;letter-spacing:-0.750px;">DELTA</div>
<div class="t" style="left:489px;top:469px;letter-spacing:-0.143px;">Bestelländerung</div>
<div class="t" style="left:597px;top:469px;color:#1b1b7a;text-decoration:underline;">1002</div>
<div class="t" style="left:689px;top:469px;letter-spacing:-0.250px;">Eingehend</div>
<div class="t" style="left:748px;top:469px;letter-spacing:0.111px;">04.03.2013</div>
<div class="t" style="left:813px;top:469px;letter-spacing:-0.333px;">Übernommen</div>
<svg class="a" style="left:885px;top:468px" width="17" height="17" viewBox="0 0 17 17"><path d="M14 1h1.2v14.2h-14v-1.2h12.8z" fill="#4a4a4a" opacity=".55"/><rect x="0" y="0" width="14" height="14" fill="#8e8e8e"/><rect x="1" y="1" width="3" height="3" fill="#fff"/><rect x="5" y="1" width="4" height="3" fill="#e6e6fc"/><rect x="10" y="1" width="3" height="3" fill="#e6e6fc"/><rect x="1" y="5" width="3" height="4" fill="#f2f2ff"/><rect x="5" y="5" width="4" height="4" fill="#e6e6fc"/><rect x="10" y="5" width="3" height="4" fill="#e6e6fc"/><rect x="1" y="10" width="3" height="3" fill="#e6e6fc"/><rect x="5" y="10" width="4" height="3" fill="#e6e6fc"/><rect x="10" y="10" width="3" height="3" fill="#e6e6fc"/><path d="M1.4 8.2L6.2 13M6.2 8.2L1.4 13" stroke="#e63a10" stroke-width="2.3" stroke-linecap="round"/><path d="M1.9 8.7L5.7 12.5M5.7 8.7L1.9 12.5" stroke="#ff8040" stroke-width=".8"/></svg>
<div class="a" style="left:2px;top:538px;width:1158px;height:5px;background:#f0f0f0"></div>
<div class="a" style="left:581px;top:538px;width:17px;height:5px;background:#fff"></div>
<div class="a" style="left:582px;top:539px;width:15px;height:1px;background:#8a8a8a"></div>
<div class="a" style="left:582px;top:541px;width:15px;height:1px;background:#8a8a8a"></div>
</body></html>
